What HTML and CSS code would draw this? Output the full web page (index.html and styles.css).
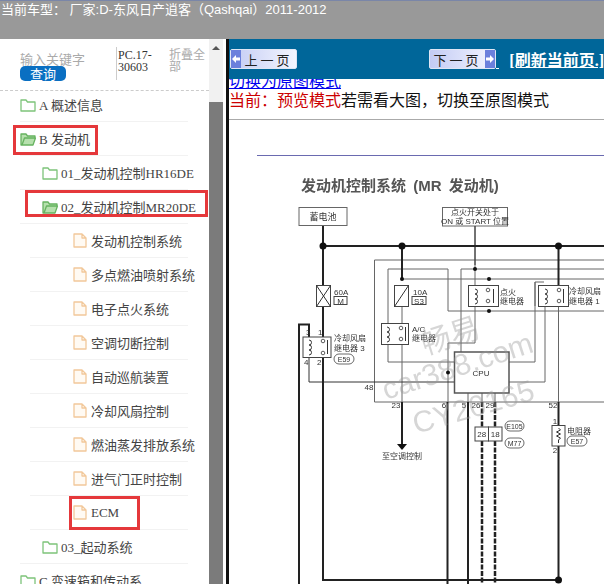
FILE: index.html
```html
<!DOCTYPE html>
<html lang="zh">
<head>
  <meta charset="UTF-8">
  <title>当前车型</title>
  <link rel="stylesheet" href="styles.css">
</head>
<body>
  <div class="topbar">当前车型： 厂家:D-东风日产逍客（Qashqai）2011-2012</div>
  <div class="main">
    <div class="sidebar">
      <div class="tree-panel">
        <div class="search">
          <div class="search-box">
            <div class="keyword">输入关键字</div>
            <div class="query-btn">查询</div>
          </div>
          <div class="doc-code">PC.17-30603</div>
          <div class="collapse">折叠全部</div>
        </div>
        <ul class="tree">
          <li class="row lvl1"><svg class="ico" width="16" height="14" viewBox="0 0 16 14"><path class="folder" d="M1 13V2h5l1.500 2H15v9z"/></svg>A 概述信息</li>
          <li class="row lvl1"><svg class="ico" width="16" height="14" viewBox="0 0 16 14"><path class="folder open" d="M1 13V2h5l1.500 2H15v2H4.500L2 13zM2 13l2.500-7H15.500L13 13z"/></svg>B 发动机</li>
          <li class="row lvl2"><svg class="ico" width="16" height="14" viewBox="0 0 16 14"><path class="folder" d="M1 13V2h5l1.500 2H15v9z"/></svg>01_发动机控制HR16DE</li>
          <li class="row lvl2"><svg class="ico" width="16" height="14" viewBox="0 0 16 14"><path class="folder open" d="M1 13V2h5l1.500 2H15v2H4.500L2 13zM2 13l2.500-7H15.500L13 13z"/></svg>02_发动机控制MR20DE</li>
          <li class="row lvl3"><svg class="ico" width="14" height="15" viewBox="0 0 14 15"><path class="file" d="M1 1h8l4 4v9H1zM9 1v4h4"/></svg>发动机控制系统</li>
          <li class="row lvl3"><svg class="ico" width="14" height="15" viewBox="0 0 14 15"><path class="file" d="M1 1h8l4 4v9H1zM9 1v4h4"/></svg>多点燃油喷射系统</li>
          <li class="row lvl3"><svg class="ico" width="14" height="15" viewBox="0 0 14 15"><path class="file" d="M1 1h8l4 4v9H1zM9 1v4h4"/></svg>电子点火系统</li>
          <li class="row lvl3"><svg class="ico" width="14" height="15" viewBox="0 0 14 15"><path class="file" d="M1 1h8l4 4v9H1zM9 1v4h4"/></svg>空调切断控制</li>
          <li class="row lvl3"><svg class="ico" width="14" height="15" viewBox="0 0 14 15"><path class="file" d="M1 1h8l4 4v9H1zM9 1v4h4"/></svg>自动巡航装置</li>
          <li class="row lvl3"><svg class="ico" width="14" height="15" viewBox="0 0 14 15"><path class="file" d="M1 1h8l4 4v9H1zM9 1v4h4"/></svg>冷却风扇控制</li>
          <li class="row lvl3"><svg class="ico" width="14" height="15" viewBox="0 0 14 15"><path class="file" d="M1 1h8l4 4v9H1zM9 1v4h4"/></svg>燃油蒸发排放系统</li>
          <li class="row lvl3"><svg class="ico" width="14" height="15" viewBox="0 0 14 15"><path class="file" d="M1 1h8l4 4v9H1zM9 1v4h4"/></svg>进气门正时控制</li>
          <li class="row lvl3"><svg class="ico" width="14" height="15" viewBox="0 0 14 15"><path class="file" d="M1 1h8l4 4v9H1zM9 1v4h4"/></svg>ECM</li>
          <li class="row lvl2"><svg class="ico" width="16" height="14" viewBox="0 0 16 14"><path class="folder" d="M1 13V2h5l1.500 2H15v9z"/></svg>03_起动系统</li>
          <li class="row lvl1"><svg class="ico" width="16" height="14" viewBox="0 0 16 14"><path class="folder" d="M1 13V2h5l1.500 2H15v9z"/></svg>C 变速箱和传动系</li>
        </ul>
        <!-- red marks drawn over the tree -->
        <div class="mark mark-b"></div>
        <div class="mark mark-02"></div>
        <div class="mark mark-ecm"></div>
      </div>
      <div class="scrollbar">
        <div class="scroll-top"><span class="arrow-up"></span></div>
        <div class="scroll-thumb"></div>
      </div>
    </div>

    <div class="viewer">
      <div class="pager">
        <div class="page-btn prev">
          <span class="btn-end"><svg width="8" height="8" viewBox="0 0 8 8"><path class="btn-arrow" d="M0 4l4-4v2.500h4v3H4V8z"/></svg></span>
          <span class="btn-label">上一页</span>
        </div>
        <div class="page-btn next">
          <span class="btn-label">下一页</span>
          <span class="btn-end"><svg width="8" height="8" viewBox="0 0 8 8"><path class="btn-arrow" d="M8 4L4 0v2.500H0v3h4V8z"/></svg></span>
        </div>
        <a class="btn-gap" href="#">&nbsp;</a>
        <a class="refresh" href="#">[刷新当前页.]</a>
      </div>
      <div class="doc">
        <div class="doc-inner">
          <a class="switch" href="#">切换为原图模式</a>
          <div class="mode"><span class="mode-red">当前：预览模式</span>若需看大图，切换至原图模式</div>
          <hr class="rule-grey">
          <hr class="rule-blue">
          <svg class="diagram" width="375" height="424" viewBox="229 160 375 424">
            <text class="title" x="301" y="191">发动机控制系统 (MR 发动机)</text>

            <!-- top boxes -->
            <rect class="box" x="299" y="207.500" width="48" height="18"/>
            <text class="t9" x="323" y="220" text-anchor="middle">蓄电池</text>
            <rect class="box" x="442.500" y="207.500" width="65" height="18.500"/>
            <text class="t8" x="475" y="215" text-anchor="middle">点火开关处于</text>
            <text class="t8" x="475" y="224" text-anchor="middle">ON 或 START 位置</text>

            <!-- thin wires -->
            <path class="thin" d="M604 260H374.500V402H604"/>
            <path class="thin" d="M604 311H448V269H388V362H454"/>
            <path class="thin" d="M604 269H461V352"/>
            <path class="thin" d="M402 279H604"/>
            <path class="thin" d="M475 226V343H448V402"/>
            <path class="thin" d="M535 306V282H544"/>
            <path class="thin" d="M535 282V362H509"/>
            <path class="thin" d="M545 306V382H509"/>
            <path class="thin" d="M402 306V402"/>
            <path class="thin" d="M558.500 285V402"/>
            <path class="thin" d="M468 393V402M482 393V402M495 393V402"/>
            <path class="mid" d="M309 357V382H454"/>
            <path class="mid" d="M475 226V265"/>

            <!-- thick wires -->
            <path class="thick" d="M323 226V580H558.500V402"/>
            <path class="thick" d="M323 246H604"/>
            <path class="thick" d="M402 246V278M558.500 246V285"/>
            <path class="thick" d="M299 584V324.500H309V337"/>
            <path class="thick" d="M402 402V445"/>
            <path class="thick" d="M447.500 402V584M468 402V584"/>
            <path class="dash" d="M482 402V584M495 402V584"/>
            <path class="arrow" d="M397 444H407L402 450z"/>

            <circle class="dot" cx="323" cy="246" r="3.500"/>
            <circle class="dot" cx="402" cy="246" r="3.500"/>
            <circle class="dot" cx="558.500" cy="246" r="3.500"/>
            <circle class="dot" cx="475" cy="269" r="2"/>
            <circle class="dot" cx="402" cy="279" r="2"/>
            <circle class="dot" cx="489" cy="279" r="2"/>
            <circle class="dot" cx="489" cy="311" r="2"/>
            <circle class="dot" cx="448" cy="372.500" r="2"/>
            <circle class="dot" cx="558.500" cy="580" r="3.500"/>

            <!-- fuses -->
            <rect class="part" x="316.500" y="285.500" width="14" height="21"/>
            <path class="mid" d="M316.500 285.500L330.500 306.500M330.500 285.500L316.500 306.500"/>
            <text class="t8" x="334" y="295">60A</text>
            <rect class="part" x="334" y="296.500" width="13" height="8"/>
            <text class="t8" x="340.500" y="303.500" text-anchor="middle">M</text>
            <rect class="part" x="394.500" y="285.500" width="14" height="21"/>
            <path class="mid" d="M394.500 306.500L408.500 285.500"/>
            <text class="t8" x="413" y="295">10A</text>
            <rect class="part" x="412" y="296.500" width="14" height="8"/>
            <text class="t8" x="419" y="303.500" text-anchor="middle">S3</text>

            <!-- relays -->
            <rect class="part" x="468.500" y="285.500" width="30" height="21"/>
            <path class="coil" d="M475 289a2.500 2.500 0 0 1 0 5a2.500 2.500 0 0 1 0 5a2.500 2.500 0 0 1 0 5"/>
            <circle class="contact" cx="488" cy="290" r="1.800"/>
            <circle class="contact" cx="488" cy="301" r="1.800"/>
            <path class="mid" d="M493.500 289V303"/>
            <rect class="part" x="538.500" y="285.500" width="30" height="21"/>
            <path class="coil" d="M545 289a2.500 2.500 0 0 1 0 5a2.500 2.500 0 0 1 0 5a2.500 2.500 0 0 1 0 5"/>
            <circle class="contact" cx="559" cy="290" r="1.800"/>
            <circle class="contact" cx="559" cy="301" r="1.800"/>
            <path class="mid" d="M563.500 289V303"/>
            <rect class="part" x="381.500" y="323.500" width="27" height="21"/>
            <path class="coil" d="M387 327a2.500 2.500 0 0 1 0 5a2.500 2.500 0 0 1 0 5a2.500 2.500 0 0 1 0 5"/>
            <circle class="contact" cx="401" cy="328" r="1.800"/>
            <circle class="contact" cx="401" cy="339" r="1.800"/>
            <path class="mid" d="M405.500 327V341"/>
            <rect class="part" x="303" y="337" width="28" height="20.500"/>
            <path class="coil" d="M309 340a2.500 2.500 0 0 1 0 5a2.500 2.500 0 0 1 0 5a2.500 2.500 0 0 1 0 5"/>
            <circle class="contact" cx="323" cy="341" r="1.800"/>
            <circle class="contact" cx="323" cy="353" r="1.800"/>
            <path class="mid" d="M327.500 340V354"/>

            <!-- cpu -->
            <rect class="cpu" x="454.500" y="352" width="54.500" height="41"/>
            <text class="t8" x="481" y="376" text-anchor="middle">CPU</text>

            <!-- labels -->
            <text class="t8" x="500" y="295">点火</text>
            <text class="t8" x="500" y="304">继电器</text>
            <text class="t8" x="569" y="294">冷却风扇</text>
            <text class="t8" x="569" y="304">继电器 1</text>
            <text class="t8" x="412" y="332">A/C</text>
            <text class="t8" x="412" y="341">继电器</text>
            <text class="t8" x="334" y="341">冷却风扇</text>
            <text class="t8" x="334" y="351">继电器 3</text>
            <rect class="pill" x="334" y="354" width="20" height="10" rx="5"/>
            <text class="t7" x="344" y="362" text-anchor="middle">E59</text>
            <text class="t8" x="306" y="335">3</text>
            <text class="t8" x="318" y="335">1</text>
            <text class="t8" x="304" y="365">4</text>
            <text class="t8" x="317" y="365">2</text>
            <text class="t8" x="369" y="390" text-anchor="middle">48</text>
            <text class="t8" x="396" y="408" text-anchor="middle">23</text>
            <text class="t8" x="444" y="408" text-anchor="middle">6</text>
            <text class="t8" x="464" y="408" text-anchor="middle">5</text>
            <text class="t8" x="476" y="408" text-anchor="middle">26</text>
            <text class="t8" x="490" y="408" text-anchor="middle">29</text>
            <text class="t8" x="553" y="408" text-anchor="middle">52</text>
            <text class="t8" x="382" y="459">至空调控制</text>

            <rect class="part" x="475" y="427" width="13.500" height="14"/>
            <rect class="part" x="488.500" y="427" width="13.500" height="14"/>
            <text class="t8" x="481.700" y="437" text-anchor="middle">28</text>
            <text class="t8" x="495.200" y="437" text-anchor="middle">18</text>
            <rect class="pill" x="505" y="421" width="19" height="10" rx="5"/>
            <text class="t7" x="514.500" y="429" text-anchor="middle">E105</text>
            <rect class="pill" x="505" y="438" width="19" height="10" rx="5"/>
            <text class="t7" x="514.500" y="446" text-anchor="middle">M77</text>

            <rect class="part" x="552" y="425.500" width="13" height="20.500"/>
            <path class="coil" d="M558.500 428l2 2-4 2 4 2-4 2 4 2-2 2v3"/>
            <text class="t8" x="555" y="424" text-anchor="middle">1</text>
            <text class="t8" x="555" y="453" text-anchor="middle">2</text>
            <text class="t8" x="567" y="434">电阻器</text>
            <rect class="pill" x="567" y="436" width="20" height="10" rx="5"/>
            <text class="t7" x="577" y="444" text-anchor="middle">E57</text>

            <!-- watermark -->
            <text class="wm" transform="translate(425 355) rotate(-18)">畅易</text>
            <text class="wm" transform="translate(386 400) rotate(-18)">car388.com</text>
            <text class="wm" transform="translate(416 434) rotate(-16)">CY20165</text>
          </svg>
        </div>
      </div>
    </div>
  </div>
</body>
</html>
```

FILE: styles.css
```css
html, body {
  margin: 0;
  height: 100%;
  overflow: hidden;
}
body {
  display: flex;
  flex-direction: column;
  height: 584px;
  font-family: "Liberation Serif", "Noto Sans CJK SC", serif;
  background: #fff;
}
.topbar {
  height: 38px;
  flex: none;
  padding-left: 1px;
  border-top: 1px solid #7a86a8;
  background: #999;
  color: #fff;
  font-family: "Liberation Sans", "Noto Sans CJK SC", sans-serif;
  font-size: 13px;
  line-height: 17px;
  white-space: nowrap;
}
.main {
  flex: 1;
  display: flex;
  min-height: 0;
}
/* left tree */
.sidebar {
  width: 226px;
  flex: none;
  display: flex;
  overflow: hidden;
  border-right: 3px solid #111;
}
.tree-panel {
  position: relative;
  width: 209px;
  flex: none;
}
.search {
  display: flex;
  height: 51px;
  padding-left: 20px;
  border-bottom: 1px dashed #ccc;
}
.search-box {
  width: 96px;
  flex: none;
  padding-top: 13px;
}
.keyword {
  font-family: "Noto Sans CJK SC", sans-serif;
  font-size: 13px;
  line-height: 14px;
  color: #aaa;
}
.query-btn {
  width: 46px;
  height: 15px;
  border-radius: 5px;
  background: #0a6fc2;
  color: #fff;
  font-family: "Noto Sans CJK SC", sans-serif;
  font-size: 13px;
  line-height: 15px;
  text-align: center;
}
.doc-code {
  width: 46px;
  height: 30px;
  margin-top: 8px;
  padding: 2px 0 1px 1px;
  border-left: 1px solid #ccc;
  font-size: 12px;
  line-height: 12px;
  color: #333;
}
.collapse {
  width: 37px;
  margin: 9px 0 0 5px;
  font-family: "Noto Sans CJK SC", sans-serif;
  font-size: 12px;
  line-height: 12px;
  color: #aaa;
}
.tree {
  list-style: none;
  margin: -3px 0 0;
  padding: 0;
}
.row {
  display: flex;
  align-items: center;
  gap: 3px;
  height: 33px;
  width: 168px;
  border-bottom: 1px solid #f2f2f2;
  font-size: 13px;
  color: #444;
  white-space: nowrap;
}
.lvl1 { margin-left: 20px; }
.lvl2 { margin-left: 20px; padding-left: 22px; width: 146px; }
.lvl3 { margin-left: 30px; padding-left: 43px; width: 115px; gap: 4px; }
.ico { flex: none; }
.folder {
  fill: none;
  stroke: #7dc47a;
  stroke-width: 1.300;
  stroke-linejoin: round;
}
.folder.open {
  fill: #b6e0ad;
  stroke: #66b25f;
}
.file {
  fill: #fffaf3;
  stroke: #f2c89a;
  stroke-width: 1.300;
  stroke-linejoin: round;
}
.mark {
  position: absolute;
  box-sizing: border-box;
  border: 3px solid #e5383b;
}
.mark-b { left: 13px; top: 86px; width: 85px; height: 30px; }
.mark-02 { left: 25px; top: 151px; width: 183px; height: 27px; }
.mark-ecm { left: 69px; top: 457px; width: 71px; height: 34px; }
.scrollbar {
  width: 14px;
  flex: none;
  display: flex;
  flex-direction: column;
  background: #f1f1f1;
}
.scroll-top {
  height: 63px;
  flex: none;
  display: flex;
  justify-content: center;
  padding-top: 7px;
  box-sizing: border-box;
}
.arrow-up {
  width: 0;
  height: 0;
  border-left: 4px solid transparent;
  border-right: 4px solid transparent;
  border-bottom: 4px solid #555;
}
.scroll-thumb {
  flex: 1;
  background: #7b7b7b;
}
/* right side */
.viewer {
  flex: 1;
  min-width: 0;
  display: flex;
  flex-direction: column;
}
.pager {
  position: relative;
  z-index: 1;
  height: 40px;
  flex: none;
  display: flex;
  align-items: center;
  padding-left: 1px;
  background: #006699;
  white-space: nowrap;
}
.page-btn {
  width: 67px;
  height: 20px;
  flex: none;
  display: flex;
  align-items: center;
  border: 1px solid #dfe6f5;
  border-radius: 2px;
  box-sizing: border-box;
  background: linear-gradient(90deg, #c3cbf4, #f4f6ff);
  font-size: 13px;
  color: #222;
}
.next { margin-left: 132px; }
.btn-label {
  flex: 1;
  text-align: center;
  letter-spacing: 3px;
}
.btn-end {
  width: 10px;
  height: 100%;
  flex: none;
  display: flex;
  align-items: center;
  justify-content: center;
  background: #6b80dc;
}
.btn-arrow { fill: #fff; }
.btn-gap {
  width: 5px;
  margin-top: 8px;
  color: #fff;
  font-size: 12px;
}
.refresh {
  margin-left: 9px;
  color: #fff;
  font-size: 16px;
  font-weight: bold;
}
.doc {
  flex: 1;
  overflow: hidden;
}
.doc-inner {
  margin-top: -8px;
}
.switch {
  display: block;
  height: 18px;
  font-family: "Noto Sans CJK SC", sans-serif;
  font-size: 16px;
  line-height: 18px;
  color: #00e;
}
.mode {
  height: 21px;
  font-family: "Noto Sans CJK SC", sans-serif;
  font-size: 16px;
  line-height: 21px;
  color: #111;
  white-space: nowrap;
}
.mode-red { color: #c00; }
.rule-grey {
  height: 1px;
  margin: 9px 0 0;
  border: none;
  background: #aaa;
}
.rule-blue {
  height: 1px;
  margin: 35px 0 0 28px;
  border: none;
  background: #6a6ab0;
}
.diagram {
  display: block;
  margin-top: 4px;
  font-family: "Liberation Sans", "Noto Sans CJK SC", sans-serif;
  filter: blur(0.35px);
}
.title {
  font-size: 15px;
  font-weight: bold;
  word-spacing: 3px;
  fill: #555;
}
.t9 { font-size: 9px; fill: #333; }
.t8 { font-size: 8px; fill: #333; }
.t7 { font-size: 7px; fill: #333; }
.box {
  fill: #fff;
  stroke: #666;
  stroke-width: 1;
}
.thin, .mid, .thick, .dash, .coil {
  fill: none;
}
.thin { stroke: #666; stroke-width: 1; }
.mid { stroke: #333; stroke-width: 1; }
.thick { stroke: #222; stroke-width: 2; }
.dash { stroke: #222; stroke-width: 2.500; stroke-dasharray: 5 1.500; }
.coil { stroke: #333; stroke-width: 1; }
.arrow, .dot { fill: #111; }
.part {
  fill: #fff;
  stroke: #444;
  stroke-width: 1;
}
.contact {
  fill: #fff;
  stroke: #333;
  stroke-width: 0.800;
}
.pill {
  fill: #fff;
  stroke: #444;
  stroke-width: 0.800;
}
.cpu {
  fill: #fff;
  stroke: #555;
  stroke-width: 1.500;
}
.wm {
  font-size: 30px;
  fill: #999;
  fill-opacity: 0.4;
}
```
